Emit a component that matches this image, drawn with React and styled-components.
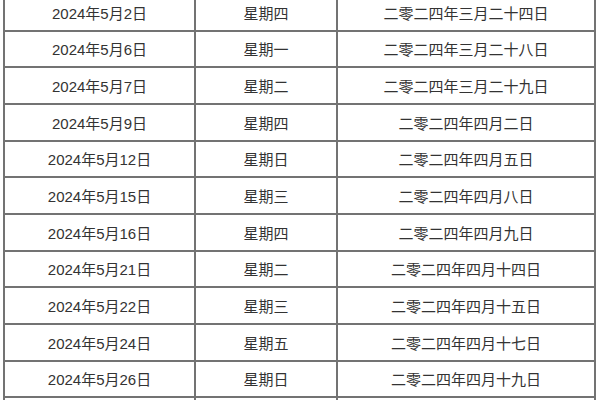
import React from "react";
import styled, { createGlobalStyle } from "styled-components";

const GlobalStyle = createGlobalStyle`
    html, body {
        margin: 0;
        padding: 0;
        background: #ffffff;
    }
    body {
        width: 600px;
        height: 400px;
        overflow: hidden;
    }
`;

const rows = [
    { date: '2024年5月2日', week: '星期四', lunar: '二零二四年三月二十四日' },
    { date: '2024年5月6日', week: '星期一', lunar: '二零二四年三月二十八日' },
    { date: '2024年5月7日', week: '星期二', lunar: '二零二四年三月二十九日' },
    { date: '2024年5月9日', week: '星期四', lunar: '二零二四年四月二日' },
    { date: '2024年5月12日', week: '星期日', lunar: '二零二四年四月五日' },
    { date: '2024年5月15日', week: '星期三', lunar: '二零二四年四月八日' },
    { date: '2024年5月16日', week: '星期四', lunar: '二零二四年四月九日' },
    { date: '2024年5月21日', week: '星期二', lunar: '二零二四年四月十四日' },
    { date: '2024年5月22日', week: '星期三', lunar: '二零二四年四月十五日' },
    { date: '2024年5月24日', week: '星期五', lunar: '二零二四年四月十七日' },
    { date: '2024年5月26日', week: '星期日', lunar: '二零二四年四月十九日' },
    { date: '', week: '', lunar: '' },
];

const App = () => {
    return (
        <SPage>
            <GlobalStyle />
            <STable>
                <colgroup>
                    <col style={{ width: 191 }} />
                    <col style={{ width: 142 }} />
                    <col style={{ width: 258 }} />
                </colgroup>
                <tbody>
                    {rows.map((row, i) => (
                        <SRow key={i}>
                            <SCell>{row.date}</SCell>
                            <SCell>{row.week}</SCell>
                            <SCell>{row.lunar}</SCell>
                        </SRow>
                    ))}
                </tbody>
            </STable>
        </SPage>
    );
};

export default App;

const SPage = styled.div`
    width: 600px;
    height: 400px;
    overflow: hidden;
    background: #ffffff;
`;

const STable = styled.table`
    margin: -7px 0 0 3px;
    width: 592px;
    table-layout: fixed;
    border-collapse: collapse;
    font-family: "Liberation Sans", "Noto Sans CJK SC", sans-serif;
    font-size: 15px;
    color: #333333;
`;

const SRow = styled.tr`
    height: 36.67px;
`;

const SCell = styled.td`
    border: 2px solid #737373;
    text-align: center;
    vertical-align: middle;
    padding: 0;
    white-space: nowrap;
`;
